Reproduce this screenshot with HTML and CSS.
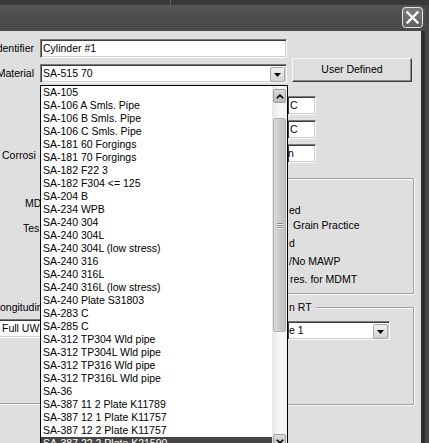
FILE: index.html
```html
<!DOCTYPE html>
<html>
<head>
<meta charset="utf-8">
<link rel="stylesheet" href="styles.css">
</head>
<body>
<div class="screen">
  <div class="backdrop-strip"><div class="backdrop-seam"></div></div>
  <div class="window">
    <div class="titlebar">
      <div class="close-btn">
        <svg width="21" height="21" viewBox="0 0 21 21">
          <defs>
            <linearGradient id="cg" x1="0" y1="0" x2="0" y2="1">
              <stop offset="0" stop-color="#7c7c7c"/>
              <stop offset="1" stop-color="#5e5e5e"/>
            </linearGradient>
          </defs>
          <rect x="0.5" y="0.5" width="20" height="20" rx="3" fill="url(#cg)" stroke="#e6e6e6" stroke-width="1"/>
          <path d="M5.5 5.5 L15.5 15.5 M15.5 5.5 L5.5 15.5" stroke="#ffffff" stroke-width="2.4" stroke-linecap="square"/>
        </svg>
      </div>
    </div>
    <div class="body">
      <div class="client">
        <div class="row row-ident">
          <div class="lbl"><span>Identifier</span></div>
          <div class="textbox wide"><span>Cylinder #1</span></div>
        </div>
        <div class="row row-material">
          <div class="lbl lbl-mat"><span>Material</span></div>
          <div class="combo wide">
            <span>SA-515 70</span>
            <div class="drop-btn">
              <svg width="7" height="4" viewBox="0 0 7 4"><polygon points="0,0 7,0 3.5,4" fill="#000"/></svg>
            </div>
          </div>
          <div class="push-btn">User Defined</div>
        </div>
        <div class="lower">
          <div class="lower-left">
            <div class="plain-lbl lbl-corr">Corrosi</div>
            <div class="plain-lbl lbl-mdmt">MD</div>
            <div class="plain-lbl lbl-test">Tes</div>
            <div class="left-group">
              <div class="plain-lbl lbl-long">ongitudin</div>
              <div class="combo combo-left"><span>Full UW</span></div>
            </div>
          </div>
          <div class="lower-right">
            <div class="unit-box box-1"><span>C</span></div>
            <div class="unit-box box-2"><span>C</span></div>
            <div class="unit-box box-3"><span class="tight">n</span></div>
            <div class="group1">
              <div class="g-line g-l1">ed</div>
              <div class="g-line g-l2">Grain Practice</div>
              <div class="g-line g-l3">d</div>
              <div class="g-line g-l4">/No MAWP</div>
              <div class="g-line g-l5">res. for MDMT</div>
            </div>
            <div class="group2">
              <div class="g2-head"><span class="g2-title">n RT</span><div class="g2-line"></div></div>
              <div class="g2-body">
                <div class="combo combo-right">
                  <span>e 1</span>
                  <div class="drop-btn">
                    <svg width="7" height="4" viewBox="0 0 7 4"><polygon points="0,0 7,0 3.5,4" fill="#000"/></svg>
                  </div>
                </div>
              </div>
            </div>
          </div>
        </div>

        <div class="listbox">
          <div class="items">
            <div class="item">SA-105</div>
            <div class="item">SA-106 A Smls. Pipe</div>
            <div class="item">SA-106 B Smls. Pipe</div>
            <div class="item">SA-106 C Smls. Pipe</div>
            <div class="item">SA-181 60 Forgings</div>
            <div class="item">SA-181 70 Forgings</div>
            <div class="item">SA-182 F22 3</div>
            <div class="item">SA-182 F304 &lt;= 125</div>
            <div class="item">SA-204 B</div>
            <div class="item">SA-234 WPB</div>
            <div class="item">SA-240 304</div>
            <div class="item">SA-240 304L</div>
            <div class="item">SA-240 304L (low stress)</div>
            <div class="item">SA-240 316</div>
            <div class="item">SA-240 316L</div>
            <div class="item">SA-240 316L (low stress)</div>
            <div class="item">SA-240 Plate S31803</div>
            <div class="item">SA-283 C</div>
            <div class="item">SA-285 C</div>
            <div class="item">SA-312 TP304 Wld pipe</div>
            <div class="item">SA-312 TP304L Wld pipe</div>
            <div class="item">SA-312 TP316 Wld pipe</div>
            <div class="item">SA-312 TP316L Wld pipe</div>
            <div class="item">SA-36</div>
            <div class="item">SA-387 11 2 Plate K11789</div>
            <div class="item">SA-387 12 1 Plate K11757</div>
            <div class="item">SA-387 12 2 Plate K11757</div>
            <div class="item selected">SA-387 22 2 Plate K21590</div>
          </div>
          <div class="scrollbar">
            <div class="sb-btn">
              <svg width="8" height="5" viewBox="0 0 8 5"><polyline points="0.8,4.3 4,1.2 7.2,4.3" fill="none" stroke="#000" stroke-width="1.6"/></svg>
            </div>
            <div class="sb-thumb">
              <div class="grip"><i></i><i></i><i></i></div>
            </div>
            <div class="sb-btn sb-down">
              <svg width="8" height="5" viewBox="0 0 8 5"><polyline points="0.8,0.7 4,3.8 7.2,0.7" fill="none" stroke="#000" stroke-width="1.6"/></svg>
            </div>
          </div>
        </div>
      </div>
      <div class="frame-right"></div>
    </div>
  </div>
</div>
</body>
</html>
```
FILE: styles.css
```css
* { box-sizing: border-box; margin: 0; padding: 0; }

html, body {
  width: 429px;
  height: 443px;
  overflow: hidden;
}

body {
  background: #454545;
  font-family: "Liberation Sans", Arial, sans-serif;
  font-size: 10.5px;
  line-height: 13px;
  color: #000;
}

.screen {
  width: 429px;
  height: 443px;
  overflow: hidden;
  position: relative;
  background: #464646;
}

.backdrop-strip {
  height: 5px;
  background: #393939;
  display: flex;
}

.backdrop-seam {
  width: 1px;
  margin-left: 170px;
  background: #5e5e5e;
}

.window {
  width: 425px;
  height: 438px;
  display: flex;
  flex-direction: column;
}

.titlebar {
  height: 26px;
  flex: none;
  background: linear-gradient(#575757, #4d4d4d 45%, #484848);
  border-top-right-radius: 7px;
  display: flex;
  justify-content: flex-end;
  align-items: flex-start;
  padding: 2px 2px 0 0;
}

.close-btn {
  width: 21px;
  height: 21px;
  display: flex;
}

.body {
  flex: 1;
  display: flex;
  min-height: 0;
}

.client {
  width: 421px;
  height: 100%;
  background: #dfdfdf;
  position: relative;
  overflow: hidden;
  padding-top: 8px;
}

.frame-right {
  width: 4px;
  background: #2e2e2e;
}

/* rows */
.row {
  display: flex;
}

.row-ident {
  height: 19px;
  align-items: center;
}

.row-material {
  height: 25px;
  align-items: flex-start;
}

.lbl {
  width: 34px;
  margin-right: 6px;
  display: flex;
  justify-content: flex-end;
  white-space: nowrap;
}

.lbl-mat {
  margin-top: 6px;
  height: 19px;
  align-items: center;
}

.textbox, .combo, .unit-box {
  background: #fff;
  border-top: 1px solid #7a7a7a;
  border-left: 1px solid #7a7a7a;
  border-right: 1px solid #fafafa;
  border-bottom: 1px solid #fafafa;
  box-shadow: inset 1px 1px 0 #3c3c3c, inset -1px -1px 0 #d0d0d0;
  display: flex;
  align-items: center;
  white-space: nowrap;
}

.wide {
  width: 247px;
  height: 19px;
  padding-left: 2px;
}

.combo {
  position: relative;
}

.row-material .combo {
  margin-top: 6px;
}

.drop-btn {
  position: absolute;
  right: 1px;
  top: 2px;
  width: 15px;
  height: 15px;
  border: 1px solid #a8a8a8;
  border-radius: 2px;
  background: linear-gradient(#f0f0f0, #d2d2d2);
  display: flex;
  align-items: center;
  justify-content: center;
}

.push-btn {
  margin-left: 5px;
  width: 120px;
  height: 24px;
  background: #dedede;
  border-top: 1px solid #f6f6f6;
  border-left: 1px solid #f6f6f6;
  border-right: 1px solid #3e3e3e;
  border-bottom: 1px solid #3e3e3e;
  box-shadow: inset -1px -1px 0 #8a8a8a;
  display: flex;
  align-items: center;
  justify-content: center;
  padding-bottom: 1px;
}

/* lower part */
.lower {
  display: flex;
}

.lower-left {
  width: 288px;
  display: flex;
  flex-direction: column;
}

.plain-lbl {
  white-space: nowrap;
  height: 13px;
}

.lbl-corr { margin-top: 66px; margin-left: 2px; }
.lbl-mdmt { margin-top: 35px; margin-left: 25px; }
.lbl-test { margin-top: 12px; margin-left: 23px; }

.left-group {
  margin-top: 66px;
  height: 103px;
  border-bottom: 1px solid #a2a2a2;
  box-shadow: 0 1px 0 #fbfbfb;
  display: flex;
  flex-direction: column;
}

.lbl-long { margin-left: 0; }

.combo-left {
  margin-top: 5px;
  margin-left: -10px;
  width: 220px;
  height: 19px;
  padding-left: 11px;
}

.lower-right {
  width: 133px;
  display: flex;
  flex-direction: column;
}

.unit-box {
  width: 28px;
  height: 19px;
  border-left: none;
  padding-left: 2px;
}

.box-1 { margin-top: 13px; }
.box-2 { margin-top: 5px; }
.box-3 { margin-top: 5px; }

.tight { margin-left: -2px; }

.group1 {
  margin-top: 15px;
  width: 126px;
  height: 116px;
  border: 1px solid #a2a2a2;
  border-left: none;
  box-shadow: inset 0 1px 0 #fbfbfb, 1px 0 0 #fbfbfb, 0 1px 0 #fbfbfb;
  padding-top: 25px;
  display: flex;
  flex-direction: column;
}

.g-line {
  height: 13px;
  white-space: nowrap;
}

.g-l1 { padding-left: 1px; }
.g-l2 { margin-top: 2px; padding-left: 5px; }
.g-l3 { margin-top: 5px; padding-left: 1px; }
.g-l4 { margin-top: 5px; padding-left: 1px; }
.g-l5 { margin-top: 5px; padding-left: 2px; }

.group2 {
  margin-top: 7px;
  width: 126px;
  display: flex;
  flex-direction: column;
}

.g2-head {
  height: 13px;
  display: flex;
  align-items: flex-end;
}

.g2-title {
  height: 13px;
  padding-left: 1px;
  padding-right: 4px;
  white-space: nowrap;
}

.g2-line {
  flex: 1;
  height: 7px;
  border-top: 1px solid #a2a2a2;
  border-right: 1px solid #a2a2a2;
  box-shadow: inset 0 1px 0 #fbfbfb, 1px 0 0 #fbfbfb;
}

.g2-body {
  height: 91px;
  border-right: 1px solid #a2a2a2;
  border-bottom: 1px solid #a2a2a2;
  box-shadow: 1px 0 0 #fbfbfb, 0 1px 0 #fbfbfb;
  padding-top: 7px;
}

.combo-right {
  width: 102px;
  height: 19px;
  border-left: none;
  padding-left: 1px;
}

/* dropdown list overlay */
.listbox {
  position: absolute;
  left: 40px;
  top: 54px;
  width: 248px;
  height: 372px;
  border: 1px solid #000;
  background: #fff;
  display: flex;
  z-index: 5;
}

.items {
  flex: 1;
  display: flex;
  flex-direction: column;
}

.item {
  height: 13px;
  padding-left: 2px;
  white-space: nowrap;
  overflow: hidden;
  flex: none;
}

.item.selected {
  background: #454545;
  color: #fff;
}

.scrollbar {
  width: 15px;
  flex: none;
  padding: 3px 1px 0 1px;
  background: linear-gradient(to right, #e6e6e6, #f7f7f7 50%, #f2f2f2);
  display: flex;
  flex-direction: column;
}

.sb-btn {
  height: 14px;
  flex: none;
  border: 1px solid #a0a0a0;
  border-radius: 2px;
  background: linear-gradient(#dadada, #b9b9b9);
  display: flex;
  align-items: center;
  justify-content: center;
}

.sb-thumb {
  margin-top: 15px;
  height: 214px;
  flex: none;
  border: 1px solid #b2b2b2;
  border-radius: 2px;
  background: linear-gradient(to right, #dadada, #cbcbcb 50%, #c2c2c2);
  display: flex;
  align-items: center;
  justify-content: center;
}

.grip {
  display: flex;
  flex-direction: column;
  gap: 1px;
}

.grip i {
  display: block;
  width: 6px;
  height: 1px;
  background: #8c8c8c;
  box-shadow: 0 1px 0 #ececec;
}

.sb-down {
  margin-top: 102px;
}
```
